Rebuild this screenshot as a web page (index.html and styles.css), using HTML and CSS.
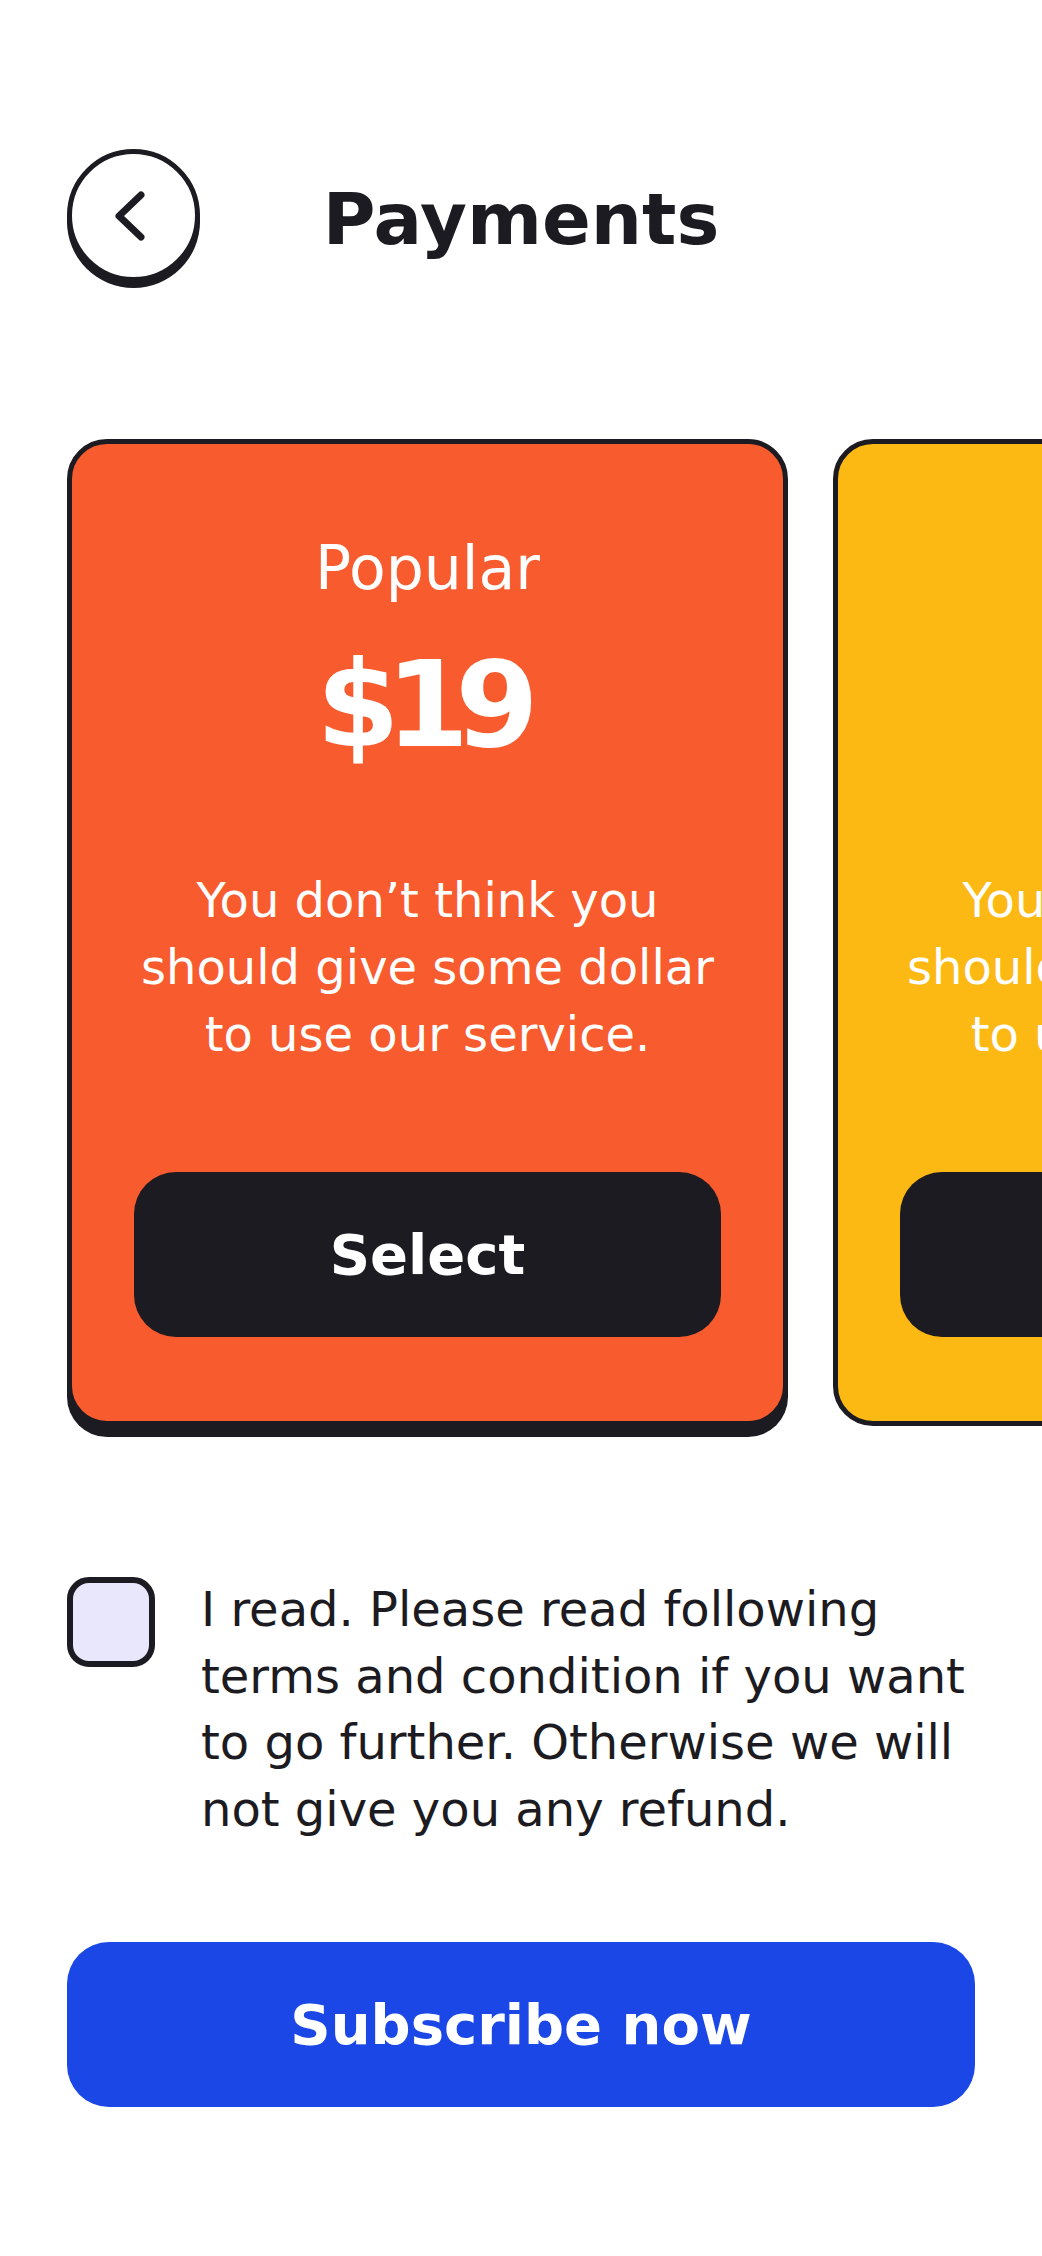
FILE: index.html
```html
<!DOCTYPE html>
<html lang="en">
<head>
<meta charset="utf-8">
<title>Payments</title>
<link rel="stylesheet" href="styles.css">
</head>
<body>
<main class="page">
  <header class="header">
    <button class="back" aria-label="Back">
      <svg class="back-icon" width="40" height="60" viewBox="0 0 40 60" aria-hidden="true">
        <path d="M27 9 L5 30 L27 51" fill="none" stroke="#1c1b21" stroke-width="7" stroke-linecap="round" stroke-linejoin="round"/>
      </svg>
    </button>
    <h1 class="title">Payments</h1>
    <span class="header-spacer"></span>
  </header>

  <section class="carousel">
    <article class="card card-orange">
      <p class="plan">Popular</p>
      <p class="price">$19</p>
      <p class="desc">You don’t think you should give some dollar to use our service.</p>
      <button class="select">Select</button>
    </article>
    <article class="card card-yellow">
      <p class="plan">Premium</p>
      <p class="price">$49</p>
      <p class="desc">You don’t think you should give some dollar to use our service.</p>
      <button class="select">Select</button>
    </article>
  </section>

  <label class="terms">
    <span class="checkbox"></span>
    <span class="terms-text">I read. Please read following terms and condition if you want to go further. Otherwise we will not give you any refund.</span>
  </label>

  <button class="subscribe">Subscribe now</button>
</main>
</body>
</html>
```

FILE: styles.css
```css
html, body {
  margin: 0;
  padding: 0;
  background: #ffffff;
  overflow-x: hidden;
}

.page {
  padding: 149px 67px 0 67px;
  font-family: "DejaVu Sans", "Noto Sans", sans-serif;
  color: #1c1b21;
}

.header {
  display: grid;
  grid-template-columns: 133px 1fr 133px;
  align-items: center;
}

.back {
  width: 133px;
  height: 133px;
  box-sizing: border-box;
  border: 5px solid #1c1b21;
  border-radius: 50%;
  background: #ffffff;
  box-shadow: 0 6px 0 #1c1b21;
  display: flex;
  align-items: center;
  justify-content: center;
  padding: 0;
  margin: 0;
}

.back-icon {
  display: block;
}

.title {
  margin: 0;
  padding-top: 7px;
  text-align: center;
  font-family: "DejaVu Sans", sans-serif;
  font-weight: 700;
  font-size: 72px;
  line-height: 72px;
  color: #1c1b21;
}

.carousel {
  display: flex;
  gap: 45px;
  margin-top: 157px;
  margin-right: -67px;
  padding-bottom: 11px;
  overflow: hidden;
}

.card {
  flex: 0 0 721px;
  box-sizing: border-box;
  border: 5px solid #1c1b21;
  border-radius: 40px;
  padding: 88px 62px 84px;
  text-align: center;
  color: #ffffff;
}

.card-orange {
  background: #f75b2e;
  box-shadow: 0 11px 0 #1c1b21;
}

.card-yellow {
  background: #fdb913;
}

.plan {
  margin: 0;
  font-size: 60px;
  line-height: 72px;
  font-weight: 400;
}

.price {
  margin: 41px 0 0;
  font-size: 120px;
  line-height: 120px;
  font-weight: 700;
  letter-spacing: -14px;
  text-indent: -14px;
}

.desc {
  margin: 102px 0 0;
  font-size: 48px;
  line-height: 67px;
  font-weight: 400;
}

.select {
  display: block;
  width: 100%;
  height: 165px;
  margin-top: 104px;
  border: none;
  border-radius: 42px;
  background: #1c1b21;
  color: #ffffff;
  font-family: "DejaVu Sans", sans-serif;
  font-weight: 700;
  font-size: 56px;
  padding: 0;
}

.terms {
  display: flex;
  align-items: flex-start;
  gap: 46px;
  margin-top: 139px;
}

.checkbox {
  flex: 0 0 auto;
  width: 88px;
  height: 90px;
  box-sizing: border-box;
  border: 6px solid #1c1b21;
  border-radius: 22px;
  background: #e9e7fb;
  margin-top: 1px;
}

.terms-text {
  flex: 1;
  font-size: 48px;
  line-height: 66.5px;
  color: #1c1b21;
}

.subscribe {
  display: block;
  width: 100%;
  height: 165px;
  margin-top: 100px;
  border: none;
  border-radius: 42px;
  background: #1a47e5;
  color: #ffffff;
  font-family: "DejaVu Sans", sans-serif;
  font-weight: 700;
  font-size: 56px;
  padding: 0;
}
```
